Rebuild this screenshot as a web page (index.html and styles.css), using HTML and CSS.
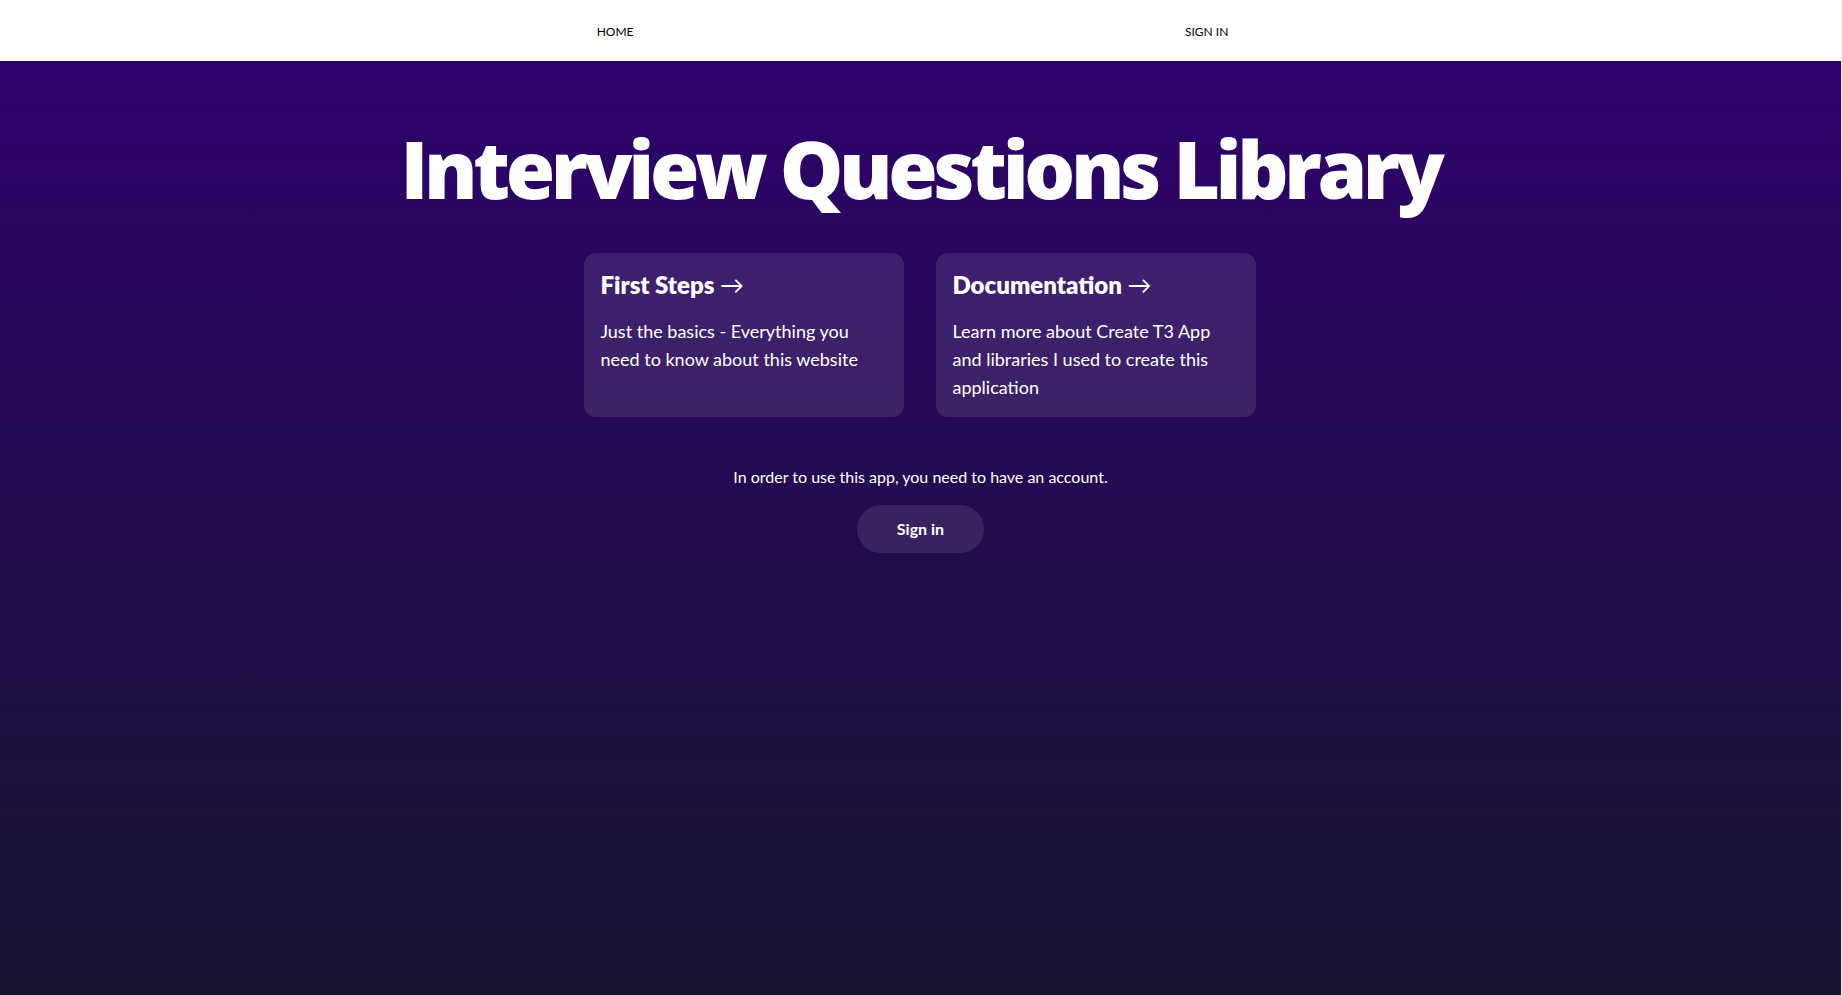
FILE: index.html
```html
<!DOCTYPE html>
<html lang="en">
<head>
<meta charset="utf-8">
<title>Interview Questions Library</title>
<link rel="stylesheet" href="styles.css">
</head>
<body>
<nav class="topnav">
  <a class="topnav-link" href="#">HOME</a>
  <a class="topnav-link" href="#">SIGN IN</a>
</nav>
<main class="hero">
  <div class="container">
    <h1 class="title">Interview Questions Library</h1>
    <div class="cards">
      <a class="card" href="#">
        <h3 class="card-title">First Steps <span class="arrow">→</span></h3>
        <div class="card-text">Just the basics - Everything you need to know about this website</div>
      </a>
      <a class="card" href="#">
        <h3 class="card-title">Documentation <span class="arrow">→</span></h3>
        <div class="card-text">Learn more about Create T3 App and libraries I used to create this application</div>
      </a>
    </div>
    <div class="auth">
      <p class="auth-text">In order to use this app, you need to have an account.</p>
      <button class="auth-button" type="button">Sign in</button>
    </div>
  </div>
</main>
</body>
</html>
```

FILE: styles.css
```css
html {
  background: #eeeeee;
}

body {
  margin: 0 1px 0 0;
  font-family: "Lato", "Liberation Sans", sans-serif;
  background: #ffffff;
}

.topnav {
  height: 61px;
  display: flex;
  align-items: center;
  justify-content: space-around;
  padding: 0 337px 0 321px;
  background: #ffffff;
}

.topnav-link {
  font-size: 12px;
  line-height: 16px;
  color: #000000;
  text-decoration: none;
  padding-top: 3px;
}

.hero {
  min-height: 100vh;
  background: linear-gradient(to bottom, #2e026d, #15162c);
  display: flex;
  flex-direction: column;
  align-items: center;
}

.container {
  display: flex;
  flex-direction: column;
  align-items: center;
  gap: 48px;
  padding: 64px 16px;
}

.title {
  margin: 0 0 -3px;
  padding-top: 3px;
  font-family: "Open Sans", "Lato", sans-serif;
  font-size: 80px;
  line-height: 80px;
  font-weight: 800;
  letter-spacing: -0.055em;
  color: #ffffff;
}

.cards {
  display: grid;
  grid-template-columns: 320px 320px;
  gap: 32px;
}

.card {
  display: flex;
  flex-direction: column;
  gap: 16px;
  padding: 16px;
  border-radius: 12px;
  background: rgba(255, 255, 255, 0.1);
  color: #ffffff;
  text-decoration: none;
  min-height: 132px;
}

.card-title {
  margin: 0;
  font-size: 24px;
  line-height: 32px;
  font-weight: 800;
}

.arrow {
  font-weight: 400;
}

.card-text {
  font-size: 18px;
  line-height: 28px;
}

.auth {
  display: flex;
  flex-direction: column;
  align-items: center;
  gap: 16px;
}

.auth-text {
  margin: 0;
  font-size: 16px;
  line-height: 24px;
  color: #ffffff;
  text-align: center;
}

.auth-button {
  border: 0;
  border-radius: 9999px;
  padding: 12px 40px;
  background: rgba(255, 255, 255, 0.1);
  color: #ffffff;
  font-family: inherit;
  font-size: 16px;
  line-height: 24px;
  font-weight: 700;
  cursor: pointer;
}
```
